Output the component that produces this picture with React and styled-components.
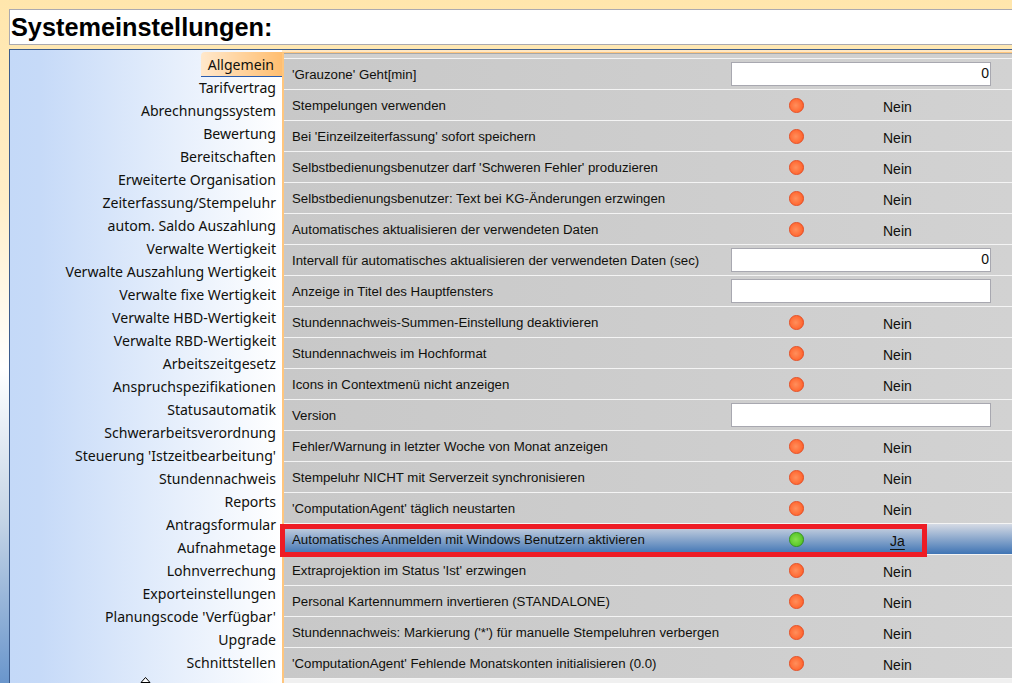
import styled, { createGlobalStyle } from "styled-components";

const GlobalStyle = createGlobalStyle`
  html, body {
    margin: 0;
    height: 683px;
    overflow: hidden;
    background: #ffe8b0;
  }
`;

const Page = styled.div`
  width: 1012px;
  height: 683px;
  overflow: hidden;
  display: flex;
  flex-direction: column;
  padding: 9px 0 0 9px;
  box-sizing: border-box;
  font-family: "Liberation Sans", Arial, sans-serif;
  background: linear-gradient(#ffe6ac 0, #ffeec8 200px, #ffffff 368px, #c4d4e6 520px, #6a96cc 683px);
`;

const TitleBar = styled.h1`
  margin: 0 0 4px;
  height: 36px;
  box-sizing: border-box;
  border: 1px solid #aaa9b0;
  border-right: 0;
  background: #fff;
  font-size: 25.3px;
  line-height: 34px;
  font-weight: bold;
  padding-left: 1px;
  color: #000;
`;

const Body = styled.div`
  flex: 1;
  display: flex;
  min-height: 0;
  border-top: 1px solid #3b5b8c;
  border-left: 1px solid #3b5b8c;
  background: #ffe8c4;
`;

const Side = styled.nav`
  position: relative;
  width: 272px;
  flex: none;
  box-sizing: border-box;
  padding: 2px 6px 0 0;
  background: linear-gradient(90deg, #c4d9f8 0, #c6daf8 30px, #ffffff 100%);
  display: flex;
  flex-direction: column;
  align-items: flex-end;
`;

const SideItem = styled.div`
  height: 23px;
  line-height: 23px;
  font-size: 14.1px;
  color: #10100c;
  white-space: nowrap;
  font-family: "Noto Sans", sans-serif;
  ${(p) =>
    p.$active &&
    `
    margin-right: -6px;
    padding: 0 8px 0 7px;
    height: 25px;
    line-height: 25px;
    margin-bottom: -1px;
    border-radius: 4px 0 0 0;
    border-bottom: 1px solid #2a5cae;
    box-sizing: border-box;
    background: linear-gradient(90deg, #ffe8cc, #ffbe70);
  `}
`;

const ScrollArrow = styled.svg`
  position: absolute;
  left: 130px;
  bottom: 0;
`;

const Main = styled.main`
  flex: 1;
  min-width: 0;
  margin-top: 2px;
  border-top: 1px solid #ffc67e;
  border-left: 2px solid #ffc67e;
  background: #f0f0f0;
  position: relative;
`;

const TopStrip = styled.div`
  height: 4px;
  background: #d0d0d0;
  border-top: 1px solid #a8a8a8;
  border-bottom: 1px solid #f4f4f4;
`;

const Row = styled.div`
  height: 31px;
  box-sizing: border-box;
  display: flex;
  align-items: center;
  padding-left: 8px;
  font-size: 13.25px;
  color: #10100c;
  border-bottom: 1px solid #f4f4f4;
  background: ${(p) =>
    p.$selected
      ? "linear-gradient(#d5dae4 0, #3f74b4 100%)"
      : "linear-gradient(90deg, #c8c8c8 0, #d2d2d2 100%)"};
`;

const RowLabel = styled.div`
  width: 439px;
  flex: none;
  white-space: nowrap;
  padding-top: 1px;
`;

const Input = styled.div`
  width: 260px;
  height: 24px;
  box-sizing: border-box;
  border: 1px solid #a8a8b0;
  background: #fff;
  text-align: right;
  padding-right: 1px;
  line-height: 21px;
  font-size: 14px;
  margin-bottom: 1px;
`;

const Dot = styled.svg`
  margin-left: 58px;
  flex: none;
`;

const Value = styled.div`
  margin-left: 79px;
  width: 60px;
  padding-top: 4px;
  font-size: 14px;
  ${(p) =>
    p.$on &&
    `
    margin-left: 86px;
    text-decoration: underline;
    text-underline-offset: 3px;
  `}
`;

const Highlight = styled.div`
  position: absolute;
  left: -4px;
  top: 471px;
  width: 647px;
  height: 33px;
  box-sizing: border-box;
  border: 5px solid #ee1c25;
  pointer-events: none;
`;

const sideItems = [
  "Allgemein",
  "Tarifvertrag",
  "Abrechnungssystem",
  "Bewertung",
  "Bereitschaften",
  "Erweiterte Organisation",
  "Zeiterfassung/Stempeluhr",
  "autom. Saldo Auszahlung",
  "Verwalte Wertigkeit",
  "Verwalte Auszahlung Wertigkeit",
  "Verwalte fixe Wertigkeit",
  "Verwalte HBD-Wertigkeit",
  "Verwalte RBD-Wertigkeit",
  "Arbeitszeitgesetz",
  "Anspruchspezifikationen",
  "Statusautomatik",
  "Schwerarbeitsverordnung",
  "Steuerung 'Istzeitbearbeitung'",
  "Stundennachweis",
  "Reports",
  "Antragsformular",
  "Aufnahmetage",
  "Lohnverrechung",
  "Exporteinstellungen",
  "Planungscode 'Verfügbar'",
  "Upgrade",
  "Schnittstellen",
];

const rows = [
  { label: "'Grauzone' Geht[min]", input: "0" },
  { label: "Stempelungen verwenden" },
  { label: "Bei 'Einzeilzeiterfassung' sofort speichern" },
  { label: "Selbstbedienungsbenutzer darf 'Schweren Fehler' produzieren" },
  { label: "Selbstbedienungsbenutzer: Text bei KG-Änderungen erzwingen" },
  { label: "Automatisches aktualisieren der verwendeten Daten" },
  { label: "Intervall für automatisches aktualisieren der verwendeten Daten (sec)", input: "0" },
  { label: "Anzeige in Titel des Hauptfensters", input: "" },
  { label: "Stundennachweis-Summen-Einstellung deaktivieren" },
  { label: "Stundennachweis im Hochformat" },
  { label: "Icons in Contextmenü nicht anzeigen" },
  { label: "Version", input: "" },
  { label: "Fehler/Warnung in letzter Woche von Monat anzeigen" },
  { label: "Stempeluhr NICHT mit Serverzeit synchronisieren" },
  { label: "'ComputationAgent' täglich neustarten" },
  { label: "Automatisches Anmelden mit Windows Benutzern aktivieren", on: true },
  { label: "Extraprojektion im Status 'Ist' erzwingen" },
  { label: "Personal Kartennummern invertieren (STANDALONE)" },
  { label: "Stundennachweis: Markierung ('*') für manuelle Stempeluhren verbergen" },
  { label: "'ComputationAgent' Fehlende Monatskonten initialisieren (0.0)" },
];

const StatusDot = ({ on }) => {
  const id = on ? "dotOn" : "dotOff";
  return (
    <Dot width="15" height="15" viewBox="0 0 15 15">
      <defs>
        <radialGradient id={id} cx="0.45" cy="0.5" r="0.6">
          <stop offset="0" stopColor={on ? "#86e04e" : "#ff8f5c"} />
          <stop offset="0.75" stopColor={on ? "#5cc82c" : "#ff6a34"} />
          <stop offset="1" stopColor={on ? "#3fa41c" : "#ee4e20"} />
        </radialGradient>
      </defs>
      <circle cx="7.5" cy="7.5" r="7.1" fill={`url(#${id})`} stroke={on ? "#2f8c18" : "#e2481e"} strokeWidth="0.8" />
    </Dot>
  );
};

export default function App() {
  return (
    <Page>
      <GlobalStyle />
      <TitleBar>Systemeinstellungen:</TitleBar>
      <Body>
        <Side>
          {sideItems.map((item, i) => (
            <SideItem key={item} $active={i === 0}>
              {item}
            </SideItem>
          ))}
          <ScrollArrow width="11" height="6" viewBox="0 0 11 6">
            <path d="M5.5 0.5 L10 5.5 H1 Z" fill="#fff" stroke="#000" strokeWidth="1" />
          </ScrollArrow>
        </Side>
        <Main>
          <TopStrip />
          {rows.map((row) => (
            <Row key={row.label} $selected={row.on}>
              <RowLabel>{row.label}</RowLabel>
              {row.input !== undefined ? (
                <Input>{row.input}</Input>
              ) : (
                <>
                  <StatusDot on={row.on} />
                  <Value $on={row.on}>{row.on ? "Ja" : "Nein"}</Value>
                </>
              )}
            </Row>
          ))}
          <Highlight />
        </Main>
      </Body>
    </Page>
  );
}
